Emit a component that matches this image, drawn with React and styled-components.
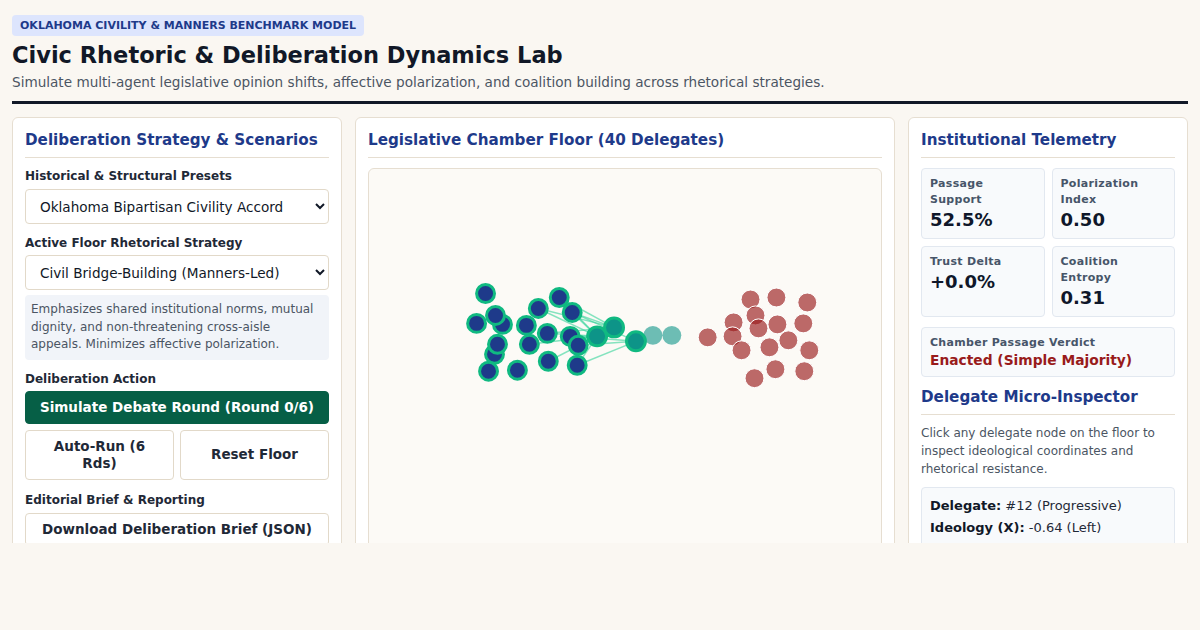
import styled, { createGlobalStyle } from 'styled-components';

const GlobalStyle = createGlobalStyle`
    html, body {
        margin: 0;
        background: #faf7f2;
        font-family: "DejaVu Sans", "Noto Sans", sans-serif;
        color: #111827;
    }
    * { box-sizing: border-box; }
`;

const Page = styled.div`
    padding: 14px 12px 0;
`;

const Badge = styled.div`
    display: inline-block;
    padding: 4px 8px;
    border-radius: 4px;
    background: #dde5fd;
    color: #1e3a8a;
    font-size: 11px;
    line-height: 13px;
    font-weight: 700;
    text-transform: uppercase;
`;

const Title = styled.h1`
    margin: 4px 0 0;
    font-size: 22.5px;
    line-height: 30px;
    font-weight: 700;
    color: #111827;
`;

const Subtitle = styled.p`
    margin: 2px 0 0;
    font-size: 13.6px;
    line-height: 20px;
    color: #4b5563;
`;

const Rule = styled.hr`
    margin: 9px 0 13px;
    border: 0;
    border-top: 3px solid #111827;
`;

const Columns = styled.main`
    display: grid;
    grid-template-columns: 330px 1fr 280px;
    gap: 13px;
    align-items: start;
    height: 426px;
    overflow: hidden;
`;

const Panel = styled.section`
    background: #ffffff;
    border: 1px solid #e6ded1;
    border-radius: 6px;
    padding: 12px;
    min-height: 480px;
`;

const PanelTitle = styled.h2`
    margin: ${(p) => (p.$spaced ? '10px' : '0')} 0 0;
    padding-bottom: 7px;
    border-bottom: 1px solid #e6ded1;
    font-size: 15.2px;
    line-height: 20px;
    font-weight: 700;
    color: #1e3a8a;
`;

const Label = styled.div`
    margin-top: ${(p) => p.$top || 11}px;
    font-size: 12px;
    line-height: 16px;
    font-weight: 700;
    color: #1f2937;
`;

const Select = styled.select`
    display: block;
    width: 100%;
    height: 35px;
    margin-top: ${(p) => p.$top || 5}px;
    padding: 0 10px;
    background: #ffffff;
    border: 1px solid #e2d9c9;
    border-radius: 4px;
    font-family: inherit;
    font-size: 13.6px;
    color: #111827;
`;

const Note = styled.p`
    margin: 5px 0 0;
    padding: 6px;
    border-radius: 4px;
    background: #f1f4f9;
    font-size: 12px;
    line-height: 17.5px;
    color: #4b5563;
`;

const Button = styled.button`
    display: block;
    width: 100%;
    margin-top: ${(p) => p.$top || 0}px;
    min-height: 32px;
    padding: 7px 12px;
    border-radius: 4px;
    border: 1px solid ${(p) => (p.$primary ? '#065f46' : '#e2d9c9')};
    background: ${(p) => (p.$primary ? '#065f46' : '#ffffff')};
    color: ${(p) => (p.$primary ? '#ffffff' : '#1f2937')};
    font-family: inherit;
    font-size: 13.5px;
    line-height: 17px;
    font-weight: 700;
`;

const ButtonRow = styled.div`
    display: grid;
    grid-template-columns: 1fr 1fr;
    gap: 6px;
    margin-top: 6px;
    & > button {
        min-height: 50px;
        padding: 7px 16px;
    }
`;

const Floor = styled.div`
    margin-top: 10px;
    height: 420px;
    background: #fcfaf6;
    border: 1px solid #e6ded1;
    border-radius: 6px;
    overflow: hidden;
    & > svg {
        display: block;
    }
`;

const MetricGrid = styled.div`
    display: grid;
    grid-template-columns: 1fr 1fr;
    gap: 7px;
    margin-top: 10px;
`;

const Card = styled.div`
    padding: 7px 8px;
    background: #f8fafc;
    border: 1px solid #e2e8f0;
    border-radius: 4px;
    margin-top: ${(p) => p.$top || 0}px;
`;

const MetricLabel = styled.div`
    font-size: 11px;
    line-height: 16px;
    font-weight: 700;
    letter-spacing: 0.3px;
    color: #475569;
`;

const MetricValue = styled.div`
    font-size: 18px;
    line-height: 23px;
    font-weight: 700;
    color: ${(p) => p.$color || '#0f172a'};
    ${(p) => p.$small && 'font-size: 13.8px; line-height: 17px; margin-top: 1px;'}
`;

const Help = styled.p`
    margin: 9px 0 0;
    font-size: 12px;
    line-height: 18px;
    color: #4b5563;
`;

const InspectRow = styled.div`
    font-size: 13px;
    line-height: 22px;
    color: #1f2937;
    & > b {
        color: #111827;
    }
`;

// delegates as [x, y] inside the floor canvas
const progressives = [
    [117, 125], [108, 155], [134, 156], [127, 147], [126, 186], [129, 176],
    [120, 203], [149, 202], [170, 140], [158, 157], [161, 176], [179, 165],
    [180, 193], [191, 129], [204, 144], [202, 168], [210, 177], [209, 197],
];
const coalition = [[229, 168], [246, 159], [268, 173]];
const drifting = [[285, 167], [304, 167]];
const conservatives = [
    [383, 131], [409, 129], [440, 134], [388, 147], [366, 154], [410, 156],
    [436, 155], [391, 160], [340, 169], [365, 168], [421, 172], [402, 179],
    [374, 182], [442, 182], [408, 201], [437, 203], [387, 210],
];
const links = [
    [8, 0], [8, 1], [13, 0], [13, 1], [14, 0], [14, 1], [14, 2], [15, 0], [15, 2],
    [16, 0], [16, 1], [16, 2], [17, 0], [17, 2], [12, 0], [11, 0], [11, 1], [10, 0],
];

function ChamberFloor() {
    return (
        <svg width="100%" height="418" viewBox="0 0 514 418" preserveAspectRatio="xMinYMin meet">
            <g stroke="#34d399" strokeWidth="1.5" strokeOpacity="0.6">
                {links.map(([a, b], i) => (
                    <line
                        key={i}
                        x1={progressives[a][0]}
                        y1={progressives[a][1]}
                        x2={coalition[b][0]}
                        y2={coalition[b][1]}
                    />
                ))}
            </g>
            {drifting.map(([x, y], i) => (
                <circle key={'d' + i} cx={x} cy={y} r="9.5" fill="#0d9488" fillOpacity="0.6" />
            ))}
            {progressives.map(([x, y], i) => (
                <circle key={'p' + i} cx={x} cy={y} r="9" fill="#1e3a8a" stroke="#10b981" strokeWidth="3" />
            ))}
            {coalition.map(([x, y], i) => (
                <circle key={'c' + i} cx={x} cy={y} r="9.5" fill="#0d9488" stroke="#10b981" strokeWidth="3" />
            ))}
            {conservatives.map(([x, y], i) => (
                <circle
                    key={'r' + i}
                    cx={x}
                    cy={y}
                    r="9.5"
                    fill="#991b1b"
                    fillOpacity="0.65"
                    stroke="#ffffff"
                    strokeWidth="1"
                />
            ))}
        </svg>
    );
}

function App() {
    return (
        <Page>
            <GlobalStyle />
            <Badge>Oklahoma Civility &amp; Manners Benchmark Model</Badge>
            <Title>Civic Rhetoric &amp; Deliberation Dynamics Lab</Title>
            <Subtitle>
                Simulate multi-agent legislative opinion shifts, affective polarization, and coalition building across
                rhetorical strategies.
            </Subtitle>
            <Rule />
            <Columns>
                <Panel>
                    <PanelTitle>Deliberation Strategy &amp; Scenarios</PanelTitle>
                    <Label $top={10}>Historical &amp; Structural Presets</Label>
                    <Select $top={5} defaultValue="ok">
                        <option value="ok">Oklahoma Bipartisan Civility Accord</option>
                    </Select>
                    <Label>Active Floor Rhetorical Strategy</Label>
                    <Select $top={4} defaultValue="civil">
                        <option value="civil">Civil Bridge-Building (Manners-Led)</option>
                    </Select>
                    <Note>
                        Emphasizes shared institutional norms, mutual dignity, and non-threatening cross-aisle appeals.
                        Minimizes affective polarization.
                    </Note>
                    <Label>Deliberation Action</Label>
                    <Button $primary $top={4}>Simulate Debate Round (Round 0/6)</Button>
                    <ButtonRow>
                        <Button>Auto-Run (6 Rds)</Button>
                        <Button>Reset Floor</Button>
                    </ButtonRow>
                    <Label $top={12}>Editorial Brief &amp; Reporting</Label>
                    <Button $top={5}>Download Deliberation Brief (JSON)</Button>
                </Panel>

                <Panel>
                    <PanelTitle>Legislative Chamber Floor (40 Delegates)</PanelTitle>
                    <Floor>
                        <ChamberFloor />
                    </Floor>
                </Panel>

                <Panel>
                    <PanelTitle>Institutional Telemetry</PanelTitle>
                    <MetricGrid>
                        <Card>
                            <MetricLabel>Passage Support</MetricLabel>
                            <MetricValue>52.5%</MetricValue>
                        </Card>
                        <Card>
                            <MetricLabel>Polarization Index</MetricLabel>
                            <MetricValue>0.50</MetricValue>
                        </Card>
                        <Card>
                            <MetricLabel>Trust Delta</MetricLabel>
                            <MetricValue>+0.0%</MetricValue>
                        </Card>
                        <Card>
                            <MetricLabel>Coalition Entropy</MetricLabel>
                            <MetricValue>0.31</MetricValue>
                        </Card>
                    </MetricGrid>
                    <Card $top={10}>
                        <MetricLabel>Chamber Passage Verdict</MetricLabel>
                        <MetricValue $small $color="#991b1b">Enacted (Simple Majority)</MetricValue>
                    </Card>
                    <PanelTitle $spaced>Delegate Micro-Inspector</PanelTitle>
                    <Help>Click any delegate node on the floor to inspect ideological coordinates and rhetorical resistance.</Help>
                    <Card $top={9}>
                        <InspectRow>
                            <b>Delegate:</b> #12 (Progressive)
                        </InspectRow>
                        <InspectRow>
                            <b>Ideology (X):</b> -0.64 (Left)
                        </InspectRow>
                    </Card>
                </Panel>
            </Columns>
        </Page>
    );
}

export default App;
